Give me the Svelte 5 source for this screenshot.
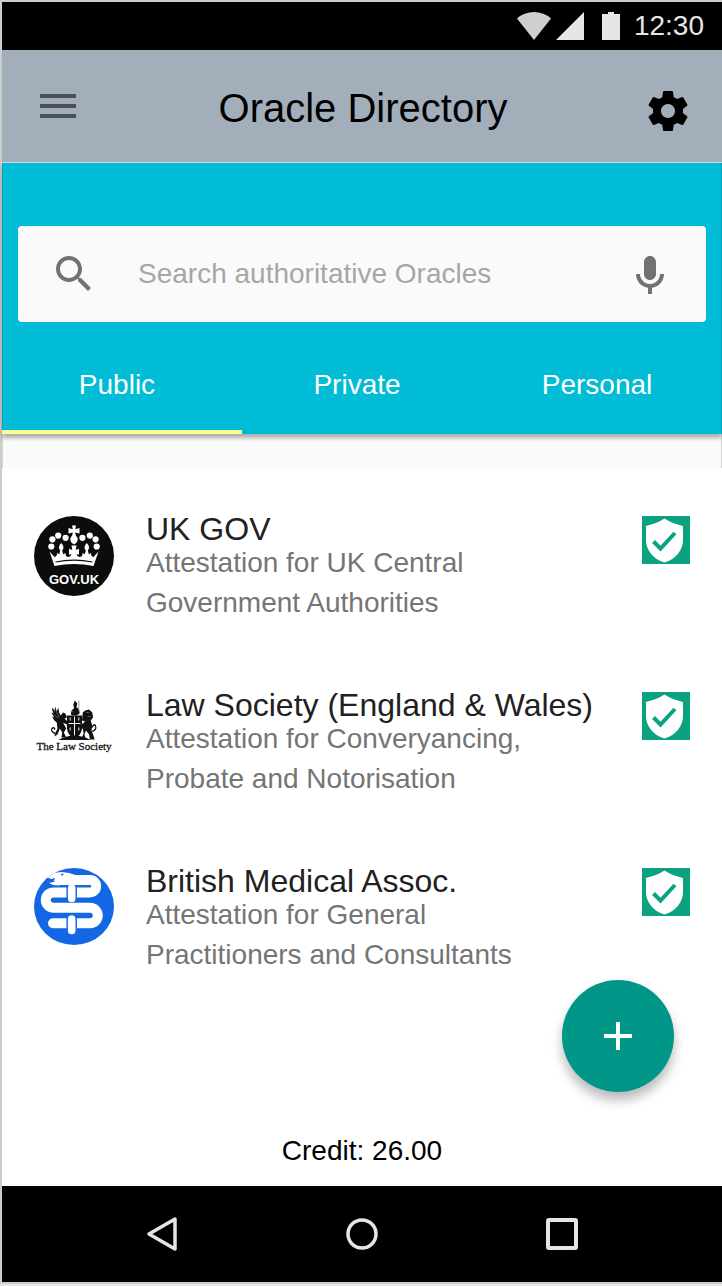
<script lang="ts">
	let tabs = ['Public', 'Private', 'Personal'];
	let activeTab = $state('Public');
	let query = $state('');

	const oracles = [
		{ logo: 'gov', name: 'UK GOV', details: ['Attestation for UK Central', 'Government Authorities'] },
		{ logo: 'law', name: 'Law Society (England & Wales)', details: ['Attestation for Converyancing,', 'Probate and Notorisation'] },
		{ logo: 'bma', name: 'British Medical Assoc.', details: ['Attestation for General', 'Practitioners and Consultants'] }
	];

	const govDots = [[17.3, 30.5], [18.4, 23.3], [24.2, 19.6], [31.6, 21.8]];
</script>

<div class="phone">
	<div class="status">
		<svg width="34" height="28" viewBox="0 0 34 28"><path d="M0 6.5Q7 0 17 0t17 6.5L17 28z" fill="#cfcfcf" /></svg>
		<svg class="signal" width="28" height="28" viewBox="0 0 28 28"><path d="M28 0v28H0z" fill="#e6e6e6" /></svg>
		<svg class="battery" width="18" height="28" viewBox="0 0 18 28"><path d="M6 0h6v2h6v26H0V2h6z" fill="#e6e6e6" /></svg>
		<span>12:30</span>
	</div>

	<header>
		<button class="menu" aria-label="Menu">
			<svg class="icon" viewBox="0 0 24 24"><path d="M3 6h18v2H3zM3 11h18v2H3zM3 16h18v2H3z" fill="#4c5059" /></svg>
		</button>
		<h1>Oracle Directory</h1>
		<button class="settings" aria-label="Settings">
			<svg class="icon" viewBox="0 0 24 24"><path d="M19.43 12.98c.04-.32.07-.64.07-.98s-.03-.66-.07-.98l2.11-1.65c.19-.15.24-.42.12-.64l-2-3.46c-.12-.22-.39-.3-.61-.22l-2.49 1c-.52-.4-1.08-.73-1.69-.98l-.38-2.65C14.46 2.18 14.25 2 14 2h-4c-.25 0-.46.18-.49.42l-.38 2.65c-.61.25-1.17.59-1.69.98l-2.49-1c-.23-.09-.49 0-.61.22l-2 3.46c-.13.22-.07.49.12.64l2.11 1.65c-.04.32-.07.65-.07.98s.03.66.07.98l-2.11 1.65c-.19.15-.24.42-.12.64l2 3.46c.12.22.39.3.61.22l2.49-1c.52.4 1.08.73 1.69.98l.38 2.65c.03.24.24.42.49.42h4c.25 0 .46-.18.49-.42l.38-2.65c.61-.25 1.17-.59 1.69-.98l2.49 1c.23.09.49 0 .61-.22l2-3.46c.12-.22.07-.49-.12-.64l-2.11-1.65zM12 15.5c-1.93 0-3.5-1.57-3.5-3.5s1.57-3.5 3.5-3.5 3.5 1.57 3.5 3.5-1.57 3.5-3.5 3.5z" /></svg>
		</button>
	</header>

	<section class="panel">
		<div class="search">
			<svg class="icon" viewBox="0 0 24 24"><path d="M15.5 14h-.79l-.28-.27C15.41 12.59 16 11.11 16 9.5 16 5.91 13.09 3 9.5 3S3 5.91 3 9.5 5.91 16 9.5 16c1.61 0 3.09-.59 4.23-1.57l.27.28v.79l5 4.99L20.49 19l-4.99-5zm-6 0C7.01 14 5 11.99 5 9.5S7.01 5 9.5 5 14 7.01 14 9.5 11.99 14 9.5 14z" fill="#727272" /></svg>
			<input type="text" placeholder="Search authoritative Oracles" aria-label="Search authoritative Oracles" bind:value={query} />
			<button aria-label="Voice search">
				<svg class="icon" viewBox="0 -1 24 24"><path d="M12 14c1.66 0 3-1.34 3-3V5c0-1.66-1.34-3-3-3S9 3.34 9 5v6c0 1.66 1.34 3 3 3zm5-3c0 2.76-2.24 5-5 5s-5-2.24-5-5H5c0 3.53 2.61 6.43 6 6.92V21h2v-3.08c3.39-.49 6-3.39 6-6.92h-2z" fill="#727272" /></svg>
			</button>
		</div>
		<nav class="tabs">
			{#each tabs as tab}
				<button class:active={tab == activeTab} onclick={() => (activeTab = tab)}>{tab}</button>
			{/each}
		</nav>
	</section>
	<div class="strip"></div>

	<main>
		<ul>
			{#each oracles as oracle}
				<li>
					{#if oracle.logo == 'gov'}
						<svg class="logo" viewBox="0 0 80 80">
							<circle cx="40" cy="40" r="40" fill="#0b0c0c" />
							<g fill="#fff">
								{#each govDots as [x, y]}
									<circle cx={x} cy={y} r="3.1" />
									<circle cx={80 - x} cy={y} r="3.1" />
								{/each}
								<!-- top cross and drop -->
								<path d="M38 9.500h4l-.8 3.700 4.300-1.200v5.600l-4.300-1.200.6 3.200q3.600 3.200.6 7.200L40 28.500l-2.400-1.700q-3-4 .6-7.200l.6-3.200-4.300 1.200V12l4.300 1.200z" />
								<!-- band with fleurs and centre cross -->
								<path d="M15.500 35.500l5 5.500q2.700-.6 2.500-4l2.200 1.200 1-3.700q-3-3.500 1-7.500 4 4 1 7.500l1 3.700 2.300-1.200q-.2 4 3 4 2.500-.2 3-3l-2.500.7v-6l3.300 1.300-.8-4.500h5l-.8 4.500 3.300-1.300v6l-2.500-.7q.5 2.800 3 3 3.200 0 3-4l2.300 1.200 1-3.700q-3-3.500 1-7.500 4 4 1 7.500l1 3.700 2.200-1.200q-.2 3.400 2.500 4l5-5.500-5 14.500q-19.500-3.800-39 0z" />
							</g>
							<path d="M21.500 46q18.500-3.600 37 0" fill="none" stroke="#0b0c0c" stroke-width="1.200" />
							<text x="40" y="68" text-anchor="middle" font-size="13" font-weight="bold" fill="#fff">GOV.UK</text>
						</svg>
					{:else if oracle.logo == 'law'}
						<svg class="logo" viewBox="0 0 80 80">
							<g transform="translate(8.500 -1.500) scale(.79 1)">
								<g fill="#111">
									<path d="M31 25h19v13q-1 7-9.500 10-8.500-3-9.500-10z" />
									<path d="M36 24q0-5 4-6l-1-4 2-4 3 3-1 4q4 1 4 6l-4 2h-5z" />
									<path d="M20 49.500q20-9 41 0z" />
									<!-- left supporter with raised wing -->
									<path d="M13 17l2 4 1-5 2 5 2-4 1 5 2 3 3-3 3 1 2 4-3 1 6 5-1 2-7-3 4 6-3 4 3 5h-6l1-5-3-4-3 6-4 2 1-3 3-5-1-6-3-2-3-4 3 1-4-5 3 1-2-4z" />
									<!-- right supporter with mane -->
									<path d="M51 22l3-2 5-1 4 3 1 5-3 3 2 5-1 5 2 4 2 5h-6l-1-5-4-4-2 4 2 5h-6l3-6-1-5-5 2-2-2 7-5 3-2-4-1z" />
									<path d="M16 43q-6-2-4-5 2-2 4 1m47 2q6-2 4-6-2-2-4 2" fill="none" stroke="#111" stroke-width="1.500" />
								</g>
								<path d="M40.500 26v19M33 33h15M35 27v3M46 27v3M35 37v3M46 37v3" stroke="#fff" stroke-width="1.200" />
								<path d="M46 10v11M17 20l4 7M15 24l5 4M55 22h4M57 26h4M37 20l2 2" stroke="#777" stroke-width=".8" />
							</g>
							<text class="lawname" x="40" y="58" text-anchor="middle" font-size="11" fill="#111" stroke="#111" stroke-width=".3">The Law Society</text>
						</svg>
					{:else}
						<svg class="logo" viewBox="0 0 80 80">
							<ellipse cx="40" cy="38.500" rx="40" ry="38.500" fill="#1367e4" />
							<path d="M27 12h29a6.200 6.200 0 0 1 0 12.400H19.500a7.700 7.700 0 0 0 0 15.400H56a7.700 7.700 0 0 1 0 15.500H19" fill="none" stroke="#fff" stroke-width="10" stroke-linecap="round" stroke-linejoin="round" />
							<!-- snake head -->
							<path d="M13.500 10q5-6 14-6 8 .5 14 3l8 1v8H29l-4 1.500-6-.5-4-2 6-1.500-1.500-1.500z" fill="#fff" />
							<path d="M13 10.500l5.500 1.500 2-1.500M27 6.500h2.500" fill="none" stroke="#1367e4" stroke-width="1.600" />
							<path d="M37.700 18v13.500M37.700 49v14" stroke="#1367e4" stroke-width="10.500" />
							<path d="M37.700 20v10.500M37.700 51v11.500" stroke="#fff" stroke-width="7.600" stroke-linecap="round" />
						</svg>
					{/if}
					<div class="info">
						<h2>{oracle.name}</h2>
						<p>{oracle.details[0]}<br />{oracle.details[1]}</p>
					</div>
					<svg class="badge" viewBox="0 0 48 48" role="img" aria-label="Verified">
						<path d="M0 0h48v48H0z" fill="#0ba37f" />
						<path d="M22.500 2.500Q30 7.500 41 10v14c0 10-7 19-18.500 22.500C11 43 4 34 4 24V10q11-2.500 18.500-7.500z" fill="#fff" />
						<path d="M11.500 25.500l7 7L33 17" fill="none" stroke="#0ba37f" stroke-width="4" />
					</svg>
				</li>
			{/each}
		</ul>
		<button class="add" aria-label="Add oracle">
			<svg width="28" height="28" viewBox="0 0 28 28"><path d="M12 0h4v12h12v4H16v12h-4V16H0v-4h12z" fill="#fff" /></svg>
		</button>
		<p class="credit">Credit: 26.00</p>
	</main>

	<footer>
		<button aria-label="Back">
			<svg class="icon" viewBox="0 0 48 48"><path d="M37 9v30L11 24z" fill="none" stroke="#e6e6e6" stroke-width="3.500" stroke-linejoin="round" /></svg>
		</button>
		<button aria-label="Home">
			<svg class="icon" viewBox="0 0 48 48"><circle cx="24" cy="24" r="14" fill="none" stroke="#e6e6e6" stroke-width="3.500" /></svg>
		</button>
		<button aria-label="Recent apps">
			<svg class="icon" viewBox="0 0 48 48"><rect x="10" y="10" width="28" height="28" rx="1" fill="none" stroke="#e6e6e6" stroke-width="4" /></svg>
		</button>
	</footer>
</div>

<style>
	:global(body) {
		background: #e6e6e6;
		padding-bottom: 2px;
	}

	.phone {
		box-sizing: border-box;
		display: flex;
		flex-direction: column;
		min-height: calc(100vh - 2px);
		border: 2px solid #ccc;
		border-right: 0;
		background: #fff;
		font-family: "Liberation Sans", Arial, sans-serif;
		font-size: 28px;
	}

	h1, h2, p, ul {
		margin: 0;
		padding: 0;
		font-weight: normal;
	}

	button {
		display: flex;
		align-items: center;
		justify-content: center;
		padding: 0;
		border: 0;
		background: none;
		font: inherit;
		cursor: pointer;
	}

	svg {
		display: block;
		flex: none;
	}

	.icon {
		width: 48px;
		height: 48px;
	}

	.status {
		display: flex;
		align-items: center;
		justify-content: flex-end;
		height: 48px;
		padding-right: 18px;
		background: #000;
		color: #e6e6e6;
	}

	.signal {
		margin-left: 5px;
	}

	.battery {
		margin: 0 14px 0 18px;
	}

	header {
		display: grid;
		grid-template-columns: 48px 1fr 48px;
		padding: 32px 30px 27px 32px;
		border-bottom: 1px solid #d3d7da;
		background: #a2afba;
	}

	.menu {
		align-self: start;
	}

	.settings {
		align-self: end;
	}

	h1 {
		font-size: 40px;
		line-height: 53px;
		text-align: center;
	}

	.panel {
		position: relative;
		padding-top: 63px;
		background: #00bcd6;
		box-shadow: inset 1px 0 #00a5bc, inset -1px 0 #00a5bc, 0 4px 4px rgba(0, 0, 0, 0.3);
	}

	.search {
		display: flex;
		align-items: center;
		height: 96px;
		margin: 0 16px;
		padding: 0 32px;
		box-sizing: border-box;
		border-radius: 4px;
		background: #fafafa;
	}

	input {
		flex: 1;
		min-width: 0;
		margin: 0 40px;
		padding: 0;
		border: 0;
		outline: 0;
		background: none;
		font: inherit;
	}

	input::placeholder {
		color: #a6a6a6;
		opacity: 1;
	}

	.tabs {
		display: grid;
		grid-template-columns: repeat(3, 1fr);
	}

	.tabs button {
		box-sizing: border-box;
		height: 112px;
		padding: 18px 10px 0 0;
		border-bottom: 4px solid transparent;
		color: #fff;
	}

	.tabs .active {
		border-color: #ffff8d;
	}

	.strip {
		height: 34px;
		border: solid #d4d4d4;
		border-width: 0 1px;
		background: #fafafa;
	}

	main {
		position: relative;
		display: flex;
		flex: 1;
		flex-direction: column;
		justify-content: space-between;
	}

	ul {
		padding: 48px 32px 0;
		list-style: none;
	}

	li {
		display: grid;
		grid-template-columns: 80px 1fr 48px;
		column-gap: 32px;
		height: 176px;
	}

	.logo {
		width: 80px;
		height: 80px;
	}

	.lawname {
		font-family: "Liberation Serif", serif;
	}

	.badge {
		width: 48px;
		height: 48px;
	}

	h2 {
		margin-bottom: 1px;
		color: #212121;
		font-size: 32px;
		line-height: 26px;
		white-space: nowrap;
	}

	.info p {
		color: #757575;
		line-height: 40px;
	}

	.add {
		position: absolute;
		right: 48px;
		bottom: 94px;
		width: 112px;
		height: 112px;
		border-radius: 50%;
		background: #009688;
		box-shadow: 0 8px 12px rgba(0, 0, 0, 0.28);
	}

	.credit {
		padding-bottom: 19px;
		line-height: 32px;
		text-align: center;
	}

	footer {
		display: flex;
		align-items: center;
		justify-content: center;
		gap: 152px;
		height: 96px;
		background: #000;
	}
</style>
